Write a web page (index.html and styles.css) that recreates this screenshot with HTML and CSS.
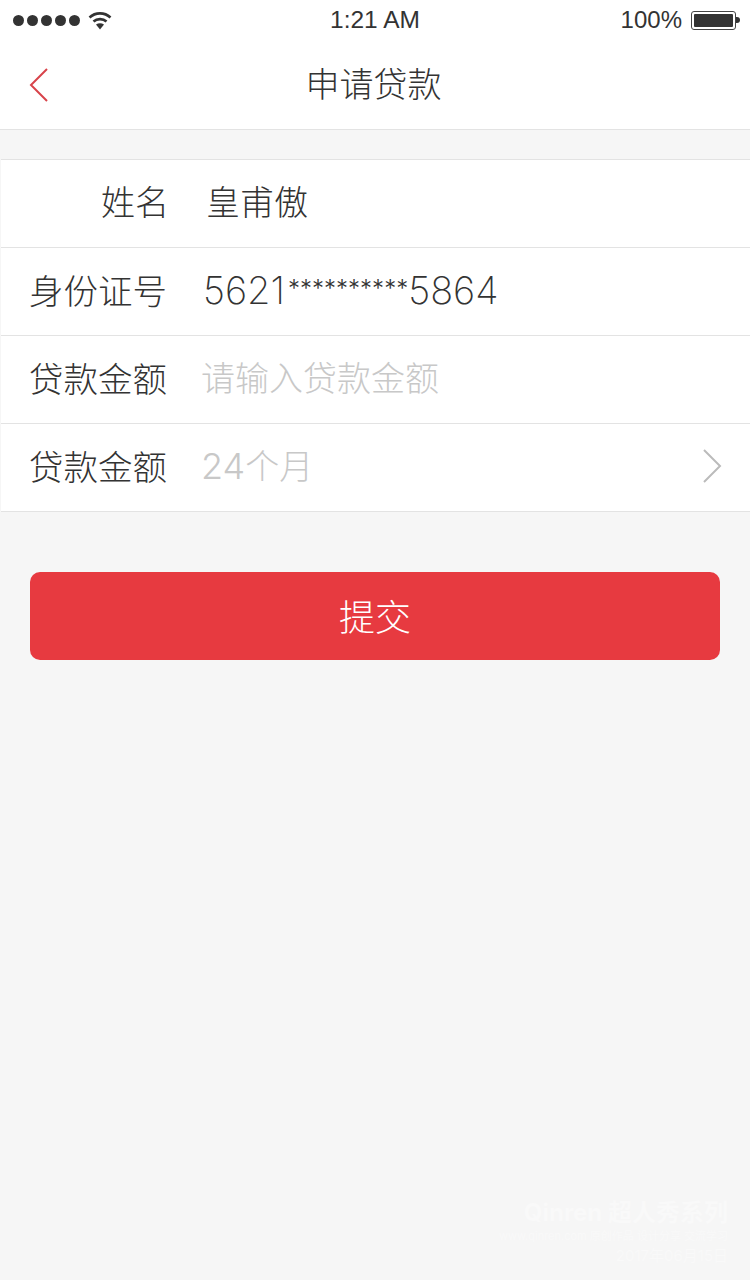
FILE: index.html
```html
<!DOCTYPE html>
<html lang="zh-CN">
<head>
<meta charset="utf-8">
<title>申请贷款</title>
<link rel="stylesheet" href="styles.css">
</head>
<body>
<div class="page">
  <header class="top">
    <div class="status">
      <div class="status-left">
        <div class="dots"><i></i><i></i><i></i><i></i><i></i></div>
        <svg class="wifi" width="24" height="19" viewBox="0 0 24 19"><path d="M1.5 6.5C7.5 1 16.5 1 22.500 6.500" fill="none" stroke="#333" stroke-width="2.600"/><path d="M5.500 10.500C9 7.300 15 7.300 18.500 10.500" fill="none" stroke="#333" stroke-width="2.600"/><path d="M8 13.500L12 18.500L16 13.500C13.500 11.700 10.500 11.700 8 13.500Z" fill="#333"/></svg>
      </div>
      <div class="time">1:21 AM</div>
      <div class="status-right">
        <span class="pct">100%</span>
        <div class="battery"><div class="cell"></div></div>
        <div class="nub"></div>
      </div>
    </div>
    <nav class="nav">
      <svg class="back" width="20" height="34" viewBox="0 0 20 34"><path d="M18 1L2 17L18 33" fill="none" stroke="#d8434a" stroke-width="2"/></svg>
      <h1 class="title">申请贷款</h1>
    </nav>
  </header>
  <section class="form">
    <div class="row"><span class="label label-short">姓名</span><span class="value name">皇甫傲</span></div>
    <div class="row"><span class="label">身份证号</span><span class="value id">5621<span class="stars">**********</span><span class="tail">5864</span></span></div>
    <div class="row"><span class="label">贷款金额</span><span class="value hint">请输入贷款金额</span></div>
    <div class="row"><span class="label">贷款金额</span><span class="value hint months"><span class="num">24</span>个月</span>
      <svg class="more" width="20" height="34" viewBox="0 0 20 34"><path d="M2 1L18 17L2 33" fill="none" stroke="#bbb" stroke-width="2"/></svg>
    </div>
  </section>
  <button class="submit" type="button">提交</button>
  <div class="mark">
    <div class="mark-a">Qinren 超人秀系列</div>
    <div class="mark-b">www.qinren.com 原创作品 设计分享 交流学习</div>
    <div class="mark-c">2017年06月15日</div>
  </div>
</div>
</body>
</html>
```
FILE: styles.css
```css
* { box-sizing: border-box; }
html, body { margin: 0; padding: 0; }
body {
  width: 750px;
  height: 1280px;
  overflow: hidden;
  background: #f6f6f6;
  color: #333;
  font-family: Inter, "Noto Sans CJK SC", sans-serif;
}
.page { position: relative; height: 1280px; }
.top { background: #fff; border-bottom: 1px solid #e3e3e3; height: 130px; }
.status {
  height: 40px;
  display: flex;
  align-items: center;
  justify-content: space-between;
  padding: 0 10px 0 13px;
  position: relative;
  font-family: "Liberation Sans", sans-serif;
}
.status-left { display: flex; align-items: center; gap: 8px; }
.dots { display: flex; gap: 3px; }
.dots i { width: 11px; height: 11px; border-radius: 50%; background: #333; display: block; }
.wifi { display: block; }
.time {
  position: absolute;
  left: 0;
  right: 0;
  text-align: center;
  font-size: 24.5px;
  line-height: 40px;
}
.status-right { display: flex; align-items: center; }
.pct { font-size: 24px; margin-right: 9px; }
.battery {
  width: 45px;
  height: 19px;
  border: 1px solid #444;
  border-radius: 3px;
  padding: 2px;
}
.cell { height: 100%; background: #333; border-radius: 1px; }
.nub { width: 4px; height: 6px; background: #333; border-radius: 0 3px 3px 0; }
.nav {
  height: 89px;
  display: flex;
  align-items: center;
  justify-content: center;
  position: relative;
  padding-right: 3px;
}
.back { position: absolute; left: 29px; top: 28px; }
.title { margin: 0; font-size: 34px; font-weight: 300; line-height: 92px; }
.form {
  margin: 29px 0 0 1px;
  background: #fff;
  border-top: 1px solid #e3e3e3;
}
.row {
  height: 88px;
  border-bottom: 1px solid #e3e3e3;
  display: flex;
  align-items: center;
  position: relative;
  padding-bottom: 6px;
}
.label {
  width: 166px;
  text-align: right;
  font-size: 34.5px;
  font-weight: 300;
  flex: none;
}
.label-short { width: 168px; font-size: 34px; }
.value { margin-left: 34px; font-size: 34px; font-weight: 300; }
.name { margin-left: 37px; }
.id {
  margin-left: 36px;
  font-size: 38px;
  font-weight: 200;
  padding-top: 2px;
}
.stars { font-size: 24px; font-weight: 300; vertical-align: 7px; margin: 0 0 0 3px; }
.hint { color: #c8c8c8; }
.num { font-size: 36px; }
.more { position: absolute; left: 701px; top: 25px; }
.submit {
  display: block;
  width: 690px;
  height: 88px;
  margin: 60px 0 0 30px;
  border: 0;
  border-radius: 10px;
  background: #e73a40;
  color: #fff;
  font-family: inherit;
  font-size: 36px;
  font-weight: 300;
  padding: 0 0 3px;
}
.mark {
  position: absolute;
  right: 22px;
  top: 1198px;
  color: #f9f9f9;
  text-align: right;
}
.mark-a { font-size: 24px; line-height: 30px; font-weight: 700; }
.mark-b { font-size: 11px; line-height: 16px; }
.mark-c { font-size: 15px; line-height: 24px; }
```
